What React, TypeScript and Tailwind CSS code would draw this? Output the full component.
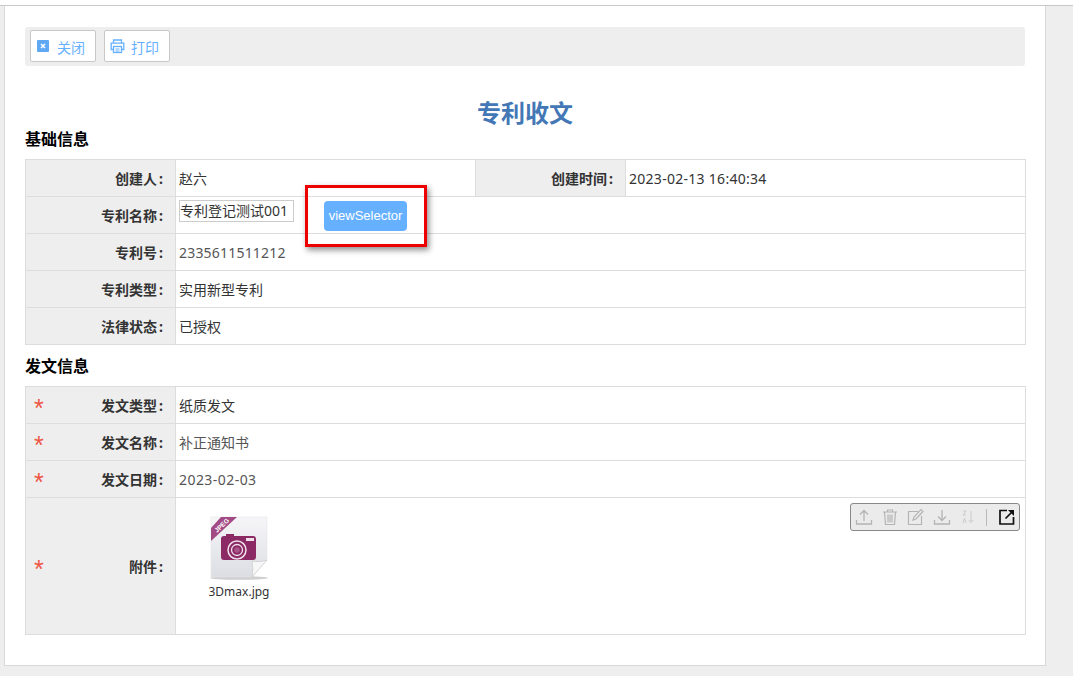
import React from "react";

const FONT = "font-['Microsoft_YaHei','Noto_Sans','Noto_Sans_CJK_SC',sans-serif]";

const labelCls =
  "relative bg-[#eeeeee] border border-[#dddddd] pr-[12px] text-right text-[14px] font-bold text-[#333333]";
const cellCls = "border border-[#dddddd] pl-[3px] text-[14px] text-[#333333]";

const Star = () => (
  <span className="absolute left-[8px] top-1/2 -translate-y-1/2 text-[25px] leading-none mt-[3px] font-normal text-[#ee5544] font-['Liberation_Sans',sans-serif]">
    *
  </span>
);

const Label = ({ text, required }: { text: string; required?: boolean }) => (
  <td className={labelCls}>
    {required && <Star />}
    {text}
    <span className="ml-[2px]">:</span>
  </td>
);

const Row = ({ label, required, children }: { label: string; required?: boolean; children: React.ReactNode }) => (
  <tr className="h-[37px]">
    <Label text={label} required={required} />
    <td className={cellCls} colSpan={3}>
      {children}
    </td>
  </tr>
);

const CloseIcon = () => (
  <svg width="12" height="12" viewBox="0 0 12 12">
    <rect width="12" height="12" rx="1" fill="#5ea8f5" />
    <path d="M4 4l4 4M8 4l-4 4" stroke="#fff" strokeWidth="1.5" />
  </svg>
);

const PrintIcon = () => (
  <svg width="15" height="15" viewBox="0 0 15 15" fill="none" stroke="#66b1ff" strokeWidth="1.3">
    <path d="M3.5 4V1h8v3" />
    <path d="M3.5 10.5H1.2V4.2h12.6v6.3h-2.3" />
    <rect x="3.5" y="7.5" width="8" height="6" />
    <path d="M5.5 10h4M5.5 12h4" strokeWidth="1" />
  </svg>
);

const FileIcon = () => (
  <svg width="64" height="68" viewBox="0 0 64 68">
    <defs>
      <linearGradient id="page" x1="0" y1="0" x2="0" y2="1">
        <stop offset="0" stopColor="#f6f6f8" />
        <stop offset="1" stopColor="#dcdee4" />
      </linearGradient>
    </defs>
    <ellipse cx="32" cy="62" rx="29" ry="1.8" fill="#cfcfcf" />
    <path d="M4 1h56v43L45 61H4z" fill="url(#page)" stroke="#e6e6e9" strokeWidth="0.6" />
    <path d="M45 61c1-6 1-11 0-16 5 1 10 1 15-1z" fill="#f7f7f7" stroke="#c4c4c4" strokeWidth="0.6" />
    <path d="M14 1h16L4 25V12z" fill="#a24a84" />
    <text x="0" y="0" transform="translate(10 17) rotate(-43)" fontSize="6.5" fontWeight="700" fill="#fff" fontFamily="Liberation Sans, sans-serif">JPEG</text>
    <path d="M14 23q0-3 3-3h2v-2h8v2h19q3 0 3 3v18q0 3-3 3H17q-3 0-3-3z" fill="#8c2a66" />
    <circle cx="30" cy="34" r="9" fill="#8c2a66" stroke="#f0e2ea" strokeWidth="1.5" />
    <circle cx="30" cy="34" r="5.5" fill="none" stroke="#f0e2ea" strokeWidth="1.3" />
    <circle cx="30" cy="34" r="2.8" fill="#a85488" />
    <rect x="39" y="22" width="8" height="3" fill="#f0e2ea" />
  </svg>
);

const Toolbar = () => (
  <div className="absolute right-[5px] top-[5px] flex h-[28px] w-[170px] items-center rounded-[3px] border border-[#888888] bg-[#ebebeb] pl-[4px]">
    <svg width="18" height="18" viewBox="0 0 18 18" fill="none" stroke="#b4b4b4" strokeWidth="1.3">
      <path d="M9 13V2.5M5 6.5l4-4 4 4M1.5 12v4h15v-4" />
    </svg>
    <svg className="ml-[8px]" width="18" height="18" viewBox="0 0 18 18" fill="none" stroke="#b4b4b4" strokeWidth="1.2">
      <path d="M2 4h14M6.5 4V2h5v2M3.5 4l1 12.5h9l1-12.5M7 6.5v8M9 6.5v8M11 6.5v8" />
    </svg>
    <svg className="ml-[8px]" width="18" height="18" viewBox="0 0 18 18" fill="none" stroke="#b4b4b4" strokeWidth="1.2">
      <path d="M11 3.5H1.5v13h13V8M7 9l-1 3 3-1 7-7.5-2-2z" />
    </svg>
    <svg className="ml-[8px]" width="18" height="18" viewBox="0 0 18 18" fill="none" stroke="#b4b4b4" strokeWidth="1.3">
      <path d="M9 2v10.5M5 8.5l4 4 4-4M1.5 12v4h15v-4" />
    </svg>
    <svg className="ml-[8px]" width="18" height="18" viewBox="0 0 18 18" fill="none" stroke="#cccccc" strokeWidth="1">
      <path d="M4 3h3L4 7h3M4 15l1.5-5L7 15M12 3v11M10 12l2 2.5 2-2.5" />
    </svg>
    <span className="ml-[9px] h-[17px] w-px bg-[#b9b9b9]" />
    <svg className="ml-[12px]" width="16" height="16" viewBox="0 0 16 16" fill="none" stroke="#111111" strokeWidth="1.7">
      <path d="M8 1.5H1v13.5h13.5V8" />
      <path d="M6.5 9.5L14 2" />
      <path d="M9 1h6v6z" fill="#111111" stroke="none" />
    </svg>
  </div>
);

export default function App() {
  return (
    <div className={`h-[676px] w-[1073px] overflow-hidden bg-[#eeeeee] ${FONT}`}>
      <div className="h-[5px] bg-white" />
      <div className="h-px bg-[#c8c8c8]" />
      <div className="relative ml-[4px] h-[660px] w-[1042px] border border-t-0 border-[#d8d8d8] bg-white pl-[20px] pt-[21px]">
        <div className="flex h-[39px] w-[1000px] items-start gap-[8px] rounded-[3px] bg-[#eeeeee] pl-[5px] pt-[3px]">
          <button className="flex h-[32px] w-[66px] items-center rounded-[2px] border border-[#c8c8c8] bg-white pl-[6px] text-[14px] text-[#66b1ff]">
            <CloseIcon />
            <span className="ml-[8px] pt-[2px]">关闭</span>
          </button>
          <button className="flex h-[32px] w-[66px] items-center rounded-[2px] border border-[#c8c8c8] bg-white pl-[5px] text-[14px] text-[#66b1ff]">
            <PrintIcon />
            <span className="ml-[6px] pt-[2px]">打印</span>
          </button>
        </div>

        <h1 className="mt-[29px] h-[36px] w-[1000px] text-center text-[24px] font-bold leading-[36px] text-[#4377b5]">专利收文</h1>
        <h2 className="mt-[-4px] h-[24px] text-[16px] font-bold leading-[24px] text-black">基础信息</h2>

        <table className="mt-[8px] w-[1001px] table-fixed border-collapse">
          <colgroup>
            <col className="w-[150px]" />
            <col className="w-[300px]" />
            <col className="w-[150px]" />
            <col />
          </colgroup>
          <tbody>
            <tr className="h-[37px]">
              <Label text="创建人" />
              <td className={cellCls}>赵六</td>
              <Label text="创建时间" />
              <td className={`${cellCls} tracking-[0.28px]`}>2023-02-13 16:40:34</td>
            </tr>
            <Row label="专利名称">
              <div className="mb-[9px] flex h-[22px] w-[115px] items-center border border-[#cccccc] text-[14px] leading-none text-[#333333]">
                专利登记测试001
              </div>
            </Row>
            <Row label="专利号">
              <span className="tracking-[0.2px] text-[#555555]">2335611511212</span>
            </Row>
            <Row label="专利类型">实用新型专利</Row>
            <Row label="法律状态">已授权</Row>
          </tbody>
        </table>

        <h2 className="mt-[9px] h-[24px] text-[16px] font-bold leading-[24px] text-black">发文信息</h2>

        <table className="mt-[8px] w-[1001px] table-fixed border-collapse">
          <colgroup>
            <col className="w-[150px]" />
            <col />
          </colgroup>
          <tbody>
            <tr className="h-[37px]">
              <Label text="发文类型" required />
              <td className={cellCls}>纸质发文</td>
            </tr>
            <tr className="h-[37px]">
              <Label text="发文名称" required />
              <td className={`${cellCls} text-[#555555]`}>补正通知书</td>
            </tr>
            <tr className="h-[37px]">
              <Label text="发文日期" required />
              <td className={`${cellCls} tracking-[0.45px] text-[#555555]`}>2023-02-03</td>
            </tr>
            <tr className="h-[137px]">
              <Label text="附件" required />
              <td className="relative border border-[#dddddd] align-top">
                <Toolbar />
                <div className="ml-[31px] mt-[18px] flex w-[64px] flex-col items-center">
                  <FileIcon />
                  <span className="mt-[-1px] whitespace-nowrap text-[12px] text-[#333333]">3Dmax.jpg</span>
                </div>
              </td>
            </tr>
          </tbody>
        </table>

        {/* highlighted element marker drawn over the form */}
        <div className="absolute left-[300px] top-[179px] flex h-[62px] w-[122px] items-center border-[3px] border-[#ee0000] pl-[16px] shadow-[2px_3px_6px_rgba(0,0,0,0.45)]">
          <button className="h-[30px] w-[83px] rounded-[4px] bg-[#66b1ff] font-['Liberation_Sans',sans-serif] text-[13px] text-white">viewSelector</button>
        </div>
      </div>
    </div>
  );
}
